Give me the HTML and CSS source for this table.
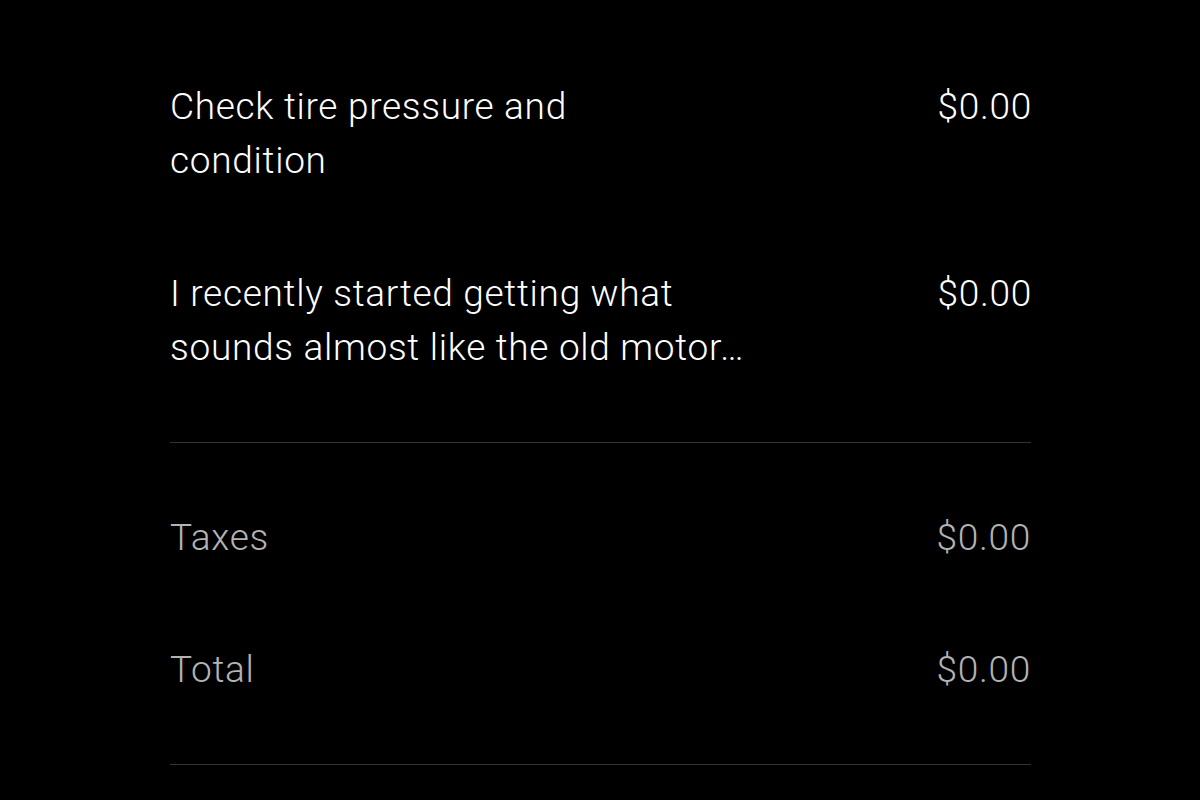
FILE: index.html
```html
<!DOCTYPE html>
<html>
<head>
<meta charset="utf-8">
<link rel="stylesheet" href="styles.css">
</head>
<body>
<div class="summary">
  <div class="item">
    <div class="desc">Check tire pressure and<br>condition</div>
    <div class="price">$0.00</div>
  </div>
  <div class="item">
    <div class="desc">I recently started getting what sounds almost like the old motor…</div>
    <div class="price">$0.00</div>
  </div>
  <div class="divider"></div>
  <div class="line muted">
    <div>Taxes</div>
    <div>$0.00</div>
  </div>
  <div class="line muted total">
    <div>Total</div>
    <div>$0.00</div>
  </div>
  <div class="divider last"></div>
</div>
</body>
</html>
```

FILE: styles.css
```css
html, body {
  margin: 0;
  background: #000;
}
body {
  font-family: Roboto, "Liberation Sans", sans-serif;
  font-weight: 300;
  font-size: 37px;
  line-height: 54px;
  letter-spacing: 0.7px;
  color: #fff;
}
.summary {
  width: 861px;
  margin-left: 170px;
  padding-top: 80px;
}
.item {
  display: flex;
  justify-content: space-between;
  align-items: flex-start;
}
.item + .item {
  margin-top: 79px;
}
.desc {
  max-width: 600px;
}
.price {
  margin-right: -1px;
}
.divider {
  height: 1px;
  background: #333;
  margin-top: 67px;
}
.line {
  display: flex;
  justify-content: space-between;
  margin-top: 68px;
}
.line.total {
  margin-top: 78px;
}
.muted {
  color: #b3b3b3;
}
.divider.last {
  margin-top: 67px;
}
```
